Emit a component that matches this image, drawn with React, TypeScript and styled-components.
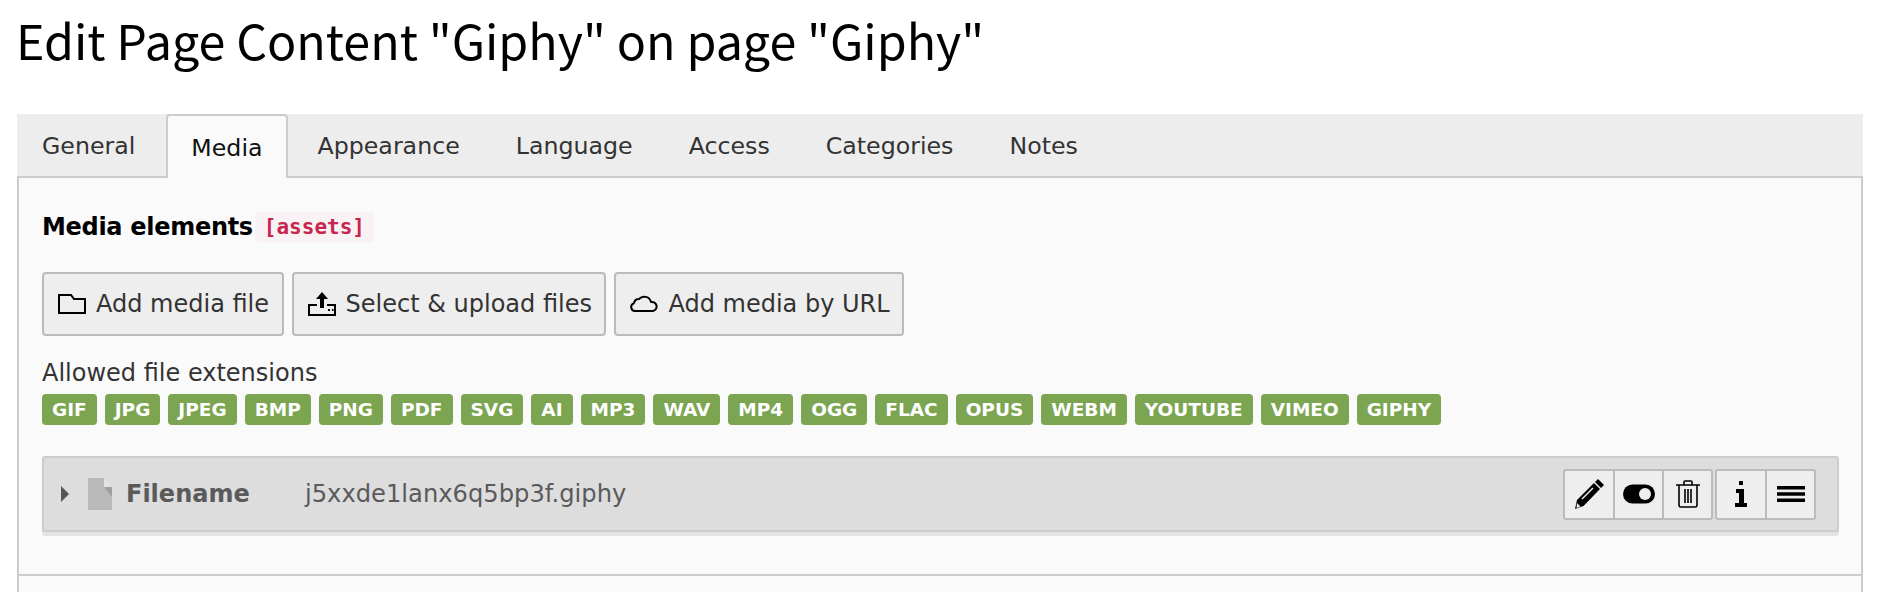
import styled, { createGlobalStyle } from 'styled-components';

const GlobalStyle = createGlobalStyle`
  html, body {
    margin: 0;
    padding: 0;
    background: #ffffff;
    overflow: hidden;
  }
  * { box-sizing: border-box; }
`;

const extensions = [
  'GIF', 'JPG', 'JPEG', 'BMP', 'PNG', 'PDF', 'SVG', 'AI', 'MP3', 'WAV',
  'MP4', 'OGG', 'FLAC', 'OPUS', 'WEBM', 'YOUTUBE', 'VIMEO', 'GIPHY',
];

const tabs = ['General', 'Media', 'Appearance', 'Language', 'Access', 'Categories', 'Notes'];

const App = (): React.ReactElement => {
  return (
    <Page>
      <GlobalStyle />
      <Title>Edit Page Content "Giphy" on page "Giphy"</Title>
      <Panel>
        <TabBar>
          {tabs.map(tab => (
            <Tab key={tab} $active={tab === 'Media'}>
              {tab}
            </Tab>
          ))}
        </TabBar>
        <Content>
          <FieldLabel>
            Media elements <FieldCode>[assets]</FieldCode>
          </FieldLabel>
          <ButtonRow>
            <ActionButton>
              <svg width="28" height="24" viewBox="0 0 28 24" fill="none" stroke="#000" strokeWidth="2">
                <path d="M1 3h12l3 4h11v14H1z" />
              </svg>
              Add media file
            </ActionButton>
            <ActionButton>
              <svg width="28" height="26" viewBox="0 0 28 26">
                <path d="M14 1l6 7h-4v9h-4V8H8z" fill="#000" />
                <path d="M9 14H1v10h26V14H19" fill="none" stroke="#000" strokeWidth="2" />
                <path d="M20 18h2v2h-2zM24 18h1.5v2H24z" fill="#000" />
              </svg>
              Select &amp; upload files
            </ActionButton>
            <ActionButton>
              <svg width="28" height="22" viewBox="0 0 28 22" fill="none" stroke="#000" strokeWidth="2">
                <path d="M6 18H5a4 4 0 0 1-1-7.8A5 5 0 0 1 9 6a7 7 0 0 1 12 3 4.5 4.5 0 0 1 2 9z" strokeLinejoin="round" />
              </svg>
              Add media by URL
            </ActionButton>
          </ButtonRow>
          <AllowedLabel>Allowed file extensions</AllowedLabel>
          <BadgeRow>
            {extensions.map(ext => (
              <Badge key={ext}>{ext}</Badge>
            ))}
          </BadgeRow>
          <FileRow>
            <FileInfo>
              <Caret />
              <svg width="24" height="32" viewBox="0 0 24 32">
                <path d="M0 0h16l8 10v22H0z" fill="#b9b9b9" />
                <path d="M16 0l8 9h-8z" fill="#e4e4e4" />
                <path d="M16 9h8v10z" fill="#a0a0a0" />
              </svg>
              <FileLabel>Filename</FileLabel>
              <FileName>j5xxde1lanx6q5bp3f.giphy</FileName>
            </FileInfo>
            <Controls>
              <ControlGroup>
                <ControlButton aria-label="Edit">
                  <svg width="30" height="30" viewBox="0 0 30 30">
                    <path d="M24 0l6 6-3 3-6-6z" fill="#000" />
                    <path d="M20 4l6 6L9.500 27 1 30l2-9z" fill="#000" />
                    <path d="M8 20L19 9" stroke="#eee" strokeWidth="1.5" />
                    <path d="M3 24l3.500 3.500L2.500 29z" fill="#eee" />
                  </svg>
                </ControlButton>
                <ControlButton aria-label="Toggle">
                  <svg width="32" height="20" viewBox="0 0 32 20">
                    <rect width="32" height="19" y="0.5" rx="9.5" fill="#000" />
                    <circle cx="22" cy="10" r="6" fill="#eee" />
                  </svg>
                </ControlButton>
                <ControlButton aria-label="Delete">
                  <svg width="24" height="28" viewBox="0 0 24 28" fill="none" stroke="#000" strokeWidth="1.6">
                    <path d="M0 5h24M8 5V2a1 1 0 0 1 1-1h6a1 1 0 0 1 1 1v3" />
                    <path d="M3 5v20a2 2 0 0 0 2 2h14a2 2 0 0 0 2-2V5" />
                    <path d="M9 9v14M12 9v14M15 9v14" />
                  </svg>
                </ControlButton>
              </ControlGroup>
              <ControlGroup>
                <ControlButton aria-label="Info">
                  <svg width="14" height="26" viewBox="0 0 14 26">
                    <path d="M5 0h4v4H5zM2 8h8v14h3v4H1v-4h4V12H2z" fill="#000" />
                  </svg>
                </ControlButton>
                <ControlButton aria-label="Sort">
                  <svg width="28" height="16" viewBox="0 0 28 16">
                    <path d="M0 0h28v3.5H0zM0 6.2h28v3.5H0zM0 12.5h28V16H0z" fill="#000" />
                  </svg>
                </ControlButton>
              </ControlGroup>
            </Controls>
          </FileRow>
          <Divider />
        </Content>
      </Panel>
    </Page>
  );
};

export default App;

const Page = styled.main`
  height: 592px;
  padding: 0 19px 0 17px;
  overflow: hidden;
  font-family: 'DejaVu Sans', Verdana, sans-serif;
`;

const Title = styled.h1`
  margin: 0 0 0 -1px;
  height: 114px;
  padding-top: 6px;
  font-family: 'Noto Sans CJK SC', 'Noto Sans', sans-serif;
  font-size: 48.4px;
  line-height: 66px;
  font-weight: 400;
  color: #000;
`;

const Panel = styled.section`
  border: 2px solid #cccccc;
  border-top: 0;
  border-radius: 3px 3px 0 0;
  border-bottom: 0;
  height: 478px;
  background: #fafafa;
`;

const TabBar = styled.nav`
  display: flex;
  height: 64px;
  background: #ededed;
  border-bottom: 2px solid #cccccc;
  border-radius: 4px 4px 0 0;
  margin: 0 -2px;
`;

const Tab = styled.div<{ $active?: boolean }>`
  height: ${p => (p.$active ? '64px' : '62px')};
  padding: 2px ${p => (p.$active ? '23px' : '28px')} 0;
  margin-right: ${p => (p.$active ? '2px' : '0')};
  display: flex;
  align-items: center;
  font-size: 23.7px;
  color: ${p => (p.$active ? '#111' : '#333')};
  background: ${p => (p.$active ? '#fafafa' : 'transparent')};
  border: ${p => (p.$active ? '2px solid #cccccc' : '0')};
  border-bottom: 0;
  border-radius: 4px 4px 0 0;
  &:first-child {
    padding: 2px 31px 0 25px;
  }
`;

const Content = styled.div`
  padding: 32px 0 0 0;
`;

const FieldLabel = styled.div`
  display: flex;
  align-items: center;
  height: 34px;
  padding-left: 23px;
  font-size: 24px;
  font-weight: 700;
  letter-spacing: -0.3px;
  color: #000;
`;

const FieldCode = styled.code`
  margin-left: 2px;
  font-family: 'DejaVu Sans Mono', 'Liberation Mono', monospace;
  font-size: 21px;
  font-weight: 700;
  letter-spacing: 0;
  color: #c7254e;
  background: #f9f2f4;
  padding: 3px 9px;
  border-radius: 3px;
`;

const ButtonRow = styled.div`
  display: flex;
  gap: 8px;
  margin: 28px 0 0 23px;
`;

const ActionButton = styled.button`
  display: flex;
  align-items: center;
  gap: 10px;
  height: 64px;
  padding: 0 12.5px 0 14px;
  border: 2px solid #bbbbbb;
  border-radius: 4px;
  background: #eeeeee;
  font-family: 'DejaVu Sans', Verdana, sans-serif;
  font-size: 24px;
  color: #333;
`;

const AllowedLabel = styled.div`
  margin: 20px 0 0 23px;
  height: 34px;
  font-size: 24px;
  line-height: 34px;
  color: #333;
`;

const BadgeRow = styled.div`
  display: flex;
  gap: 8px;
  margin: 4px 0 0 23px;
`;

const Badge = styled.span`
  display: flex;
  align-items: center;
  height: 31px;
  padding: 0 10px;
  border-radius: 4px;
  background: #7ba550;
  color: #fff;
  font-size: 18.5px;
  font-weight: 700;
`;

const FileRow = styled.div`
  display: flex;
  align-items: center;
  justify-content: space-between;
  height: 76px;
  margin: 31px 22px 0 23px;
  padding-right: 21px;
  background: #dddddd;
  border: 2px solid #cccccc;
  border-radius: 3px;
  box-shadow: 0 4px 0 #e3e3e3;
`;

const FileInfo = styled.div`
  display: flex;
  align-items: center;
  padding-left: 17px;
`;

const Caret = styled.span`
  width: 0;
  height: 0;
  margin-right: 19px;
  border-left: 8px solid #555;
  border-top: 8px solid transparent;
  border-bottom: 8px solid transparent;
`;

const FileLabel = styled.span`
  width: 179px;
  margin-left: 14px;
  font-size: 24px;
  font-weight: 700;
  color: #5a5a5a;
`;

const FileName = styled.span`
  font-size: 24.2px;
  color: #5a5a5a;
`;

const Controls = styled.div`
  display: flex;
  gap: 2px;
`;

const ControlGroup = styled.div`
  display: flex;
  border: 2px solid #bbbbbb;
  border-radius: 3px;
  background: #eeeeee;
`;

const ControlButton = styled.button`
  display: flex;
  align-items: center;
  justify-content: center;
  width: 49px;
  height: 47px;
  padding: 0;
  border: 0;
  border-left: 2px solid #bbbbbb;
  background: transparent;
  &:first-child {
    border-left: 0;
    width: 48px;
  }
`;

const Divider = styled.hr`
  height: 2px;
  margin: 42px 0 0;
  border: 0;
  background: #cccccc;
`;
